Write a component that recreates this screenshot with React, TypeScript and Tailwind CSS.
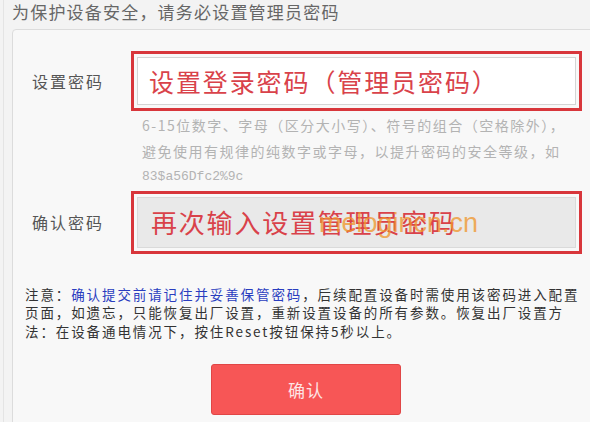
import React from "react";

export default function App() {
  return (
    <div className="w-[590px] h-[422px] overflow-hidden bg-[#f3f3f3] font-['Noto_Sans_CJK_SC',sans-serif]">
      <div className="ml-[3px] h-full border-l border-[#e4e4e4] pl-[8px]">
        <div className="pt-[1px] h-[29px] leading-[22px] text-[17px] tracking-[1.2px] text-[#666] whitespace-nowrap">
          为保护设备安全，请务必设置管理员密码
        </div>
        <div className="w-[600px] h-[420px] border border-[#dcdcdc] rounded-[4px] bg-[#f8f8f8] pt-[21px] flex flex-col">
          {/* row 1 */}
          <div className="flex items-center">
            <div className="w-[118px] pl-[19px] text-[16px] tracking-[2px] text-[#555] leading-none">设置密码</div>
            <div className="w-[451px] h-[60px] border-[3px] border-[#d8363b] p-[3px]">
              <div className="h-full border border-[#d4d4d4] bg-white flex items-center pl-[11px] text-[25px] tracking-[1.9px] text-[#d9424a] whitespace-nowrap leading-none">
                设置登录密码（管理员密码）
              </div>
            </div>
          </div>
          {/* hint */}
          <div className="mt-[2px] pl-[129px] text-[14px] tracking-[1.5px] leading-[25.5px] text-[#b3b3b3] whitespace-nowrap">
            <div>6-15位数字、字母（区分大小写）、符号的组合（空格除外），</div>
            <div>避免使用有规律的纯数字或字母，以提升密码的安全等级，如</div>
            <div className="font-['Liberation_Mono',monospace] text-[13px] tracking-[0px]">83$a56Dfc2%9c</div>
          </div>
          {/* row 2 */}
          <div className="mt-[1px] flex items-center">
            <div className="w-[118px] pl-[19px] text-[16px] tracking-[2px] text-[#555] leading-none">确认密码</div>
            <div className="w-[451px] h-[63px] border-[3px] border-[#d8363b] p-[3px]">
              <div className="relative h-full border border-[#dadada] bg-[#e9e9e9] flex items-center pl-[13px] text-[26px] tracking-[1.8px] text-[#d9424a] whitespace-nowrap leading-none">
                再次输入设置管理员密码
                <span className="absolute left-[181px] top-[12px] font-['Liberation_Sans',Arial,sans-serif] text-[27px] tracking-[0px] text-[#f0952a] opacity-75 leading-none">
                  melogincn.cn
                </span>
              </div>
            </div>
          </div>
          {/* note */}
          <div className="mt-[31px] pl-[12px] text-[13.5px] tracking-[1.9px] leading-[18.5px] text-[#333] whitespace-nowrap">
            <div>
              注意：<span className="text-[#2a3dbf]">确认提交前请记住并妥善保管密码</span>，后续配置设备时需使用该密码进入配置
            </div>
            <div>页面，如遗忘，只能恢复出厂设置，重新设置设备的所有参数。恢复出厂设置方</div>
            <div>法：在设备通电情况下，按住Reset按钮保持5秒以上。</div>
          </div>
          {/* button */}
          <div className="mt-[24px] pl-[198px]">
            <div className="w-[190px] h-[51px] rounded-[3px] border border-[#e04646] bg-[#f75656] flex items-center justify-center text-[17px] tracking-[1px] text-[#fde4e4]">
              确认
            </div>
          </div>
        </div>
      </div>
    </div>
  );
}
